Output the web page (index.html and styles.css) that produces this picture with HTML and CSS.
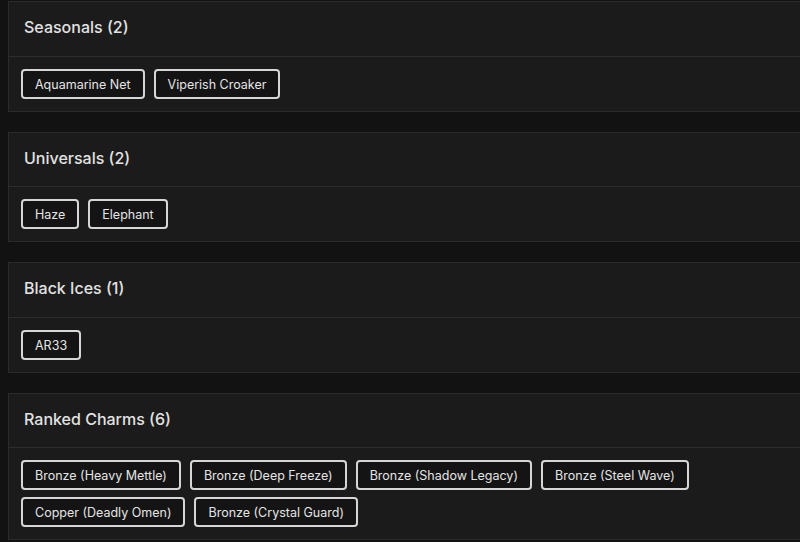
FILE: index.html
```html
<!DOCTYPE html>
<html>
<head>
<meta charset="utf-8">
<link rel="stylesheet" href="styles.css">
</head>
<body>
<div class="list">
  <section class="card">
    <header class="card-head">Seasonals (2)</header>
    <div class="card-body">
      <span class="tag">Aquamarine Net</span>
      <span class="tag">Viperish Croaker</span>
    </div>
  </section>
  <section class="card">
    <header class="card-head">Universals (2)</header>
    <div class="card-body">
      <span class="tag">Haze</span>
      <span class="tag">Elephant</span>
    </div>
  </section>
  <section class="card">
    <header class="card-head">Black Ices (1)</header>
    <div class="card-body">
      <span class="tag">AR33</span>
    </div>
  </section>
  <section class="card">
    <header class="card-head">Ranked Charms (6)</header>
    <div class="card-body">
      <span class="tag">Bronze (Heavy Mettle)</span>
      <span class="tag">Bronze (Deep Freeze)</span>
      <span class="tag">Bronze (Shadow Legacy)</span>
      <span class="tag">Bronze (Steel Wave)</span>
      <span class="tag">Copper (Deadly Omen)</span>
      <span class="tag">Bronze (Crystal Guard)</span>
    </div>
  </section>
</div>
</body>
</html>
```
FILE: styles.css
```css
html, body {
  margin: 0;
  padding: 0;
  background: #121212;
  overflow: hidden;
}
body {
  font-family: Inter, "Noto Sans", sans-serif;
  color: #e2e2e2;
}
.list {
  display: flex;
  flex-direction: column;
  gap: 20px;
  padding: 1px 0 0 8px;
  width: 820px;
}
.card {
  background: #1b1b1b;
  border: 1px solid #2b2b2b;
}
.card-head {
  display: flex;
  align-items: center;
  padding-left: 15px;
  padding-bottom: 3px;
  box-sizing: border-box;
  height: 54.6px;
  font-size: 16px;
  font-weight: 500;
  border-bottom: 1px solid #2d2d2d;
}
.card-body {
  display: flex;
  flex-wrap: wrap;
  gap: 7px 9px;
  padding: 12px 12px;
  width: 760px;
}
.tag {
  box-sizing: border-box;
  height: 30px;
  display: inline-flex;
  align-items: center;
  padding: 1px 12px 0;
  border: 2px solid #d6d6d6;
  border-radius: 4px;
  background: #141414;
  font-size: 12.5px;
  color: #e4e4e4;
}
```
